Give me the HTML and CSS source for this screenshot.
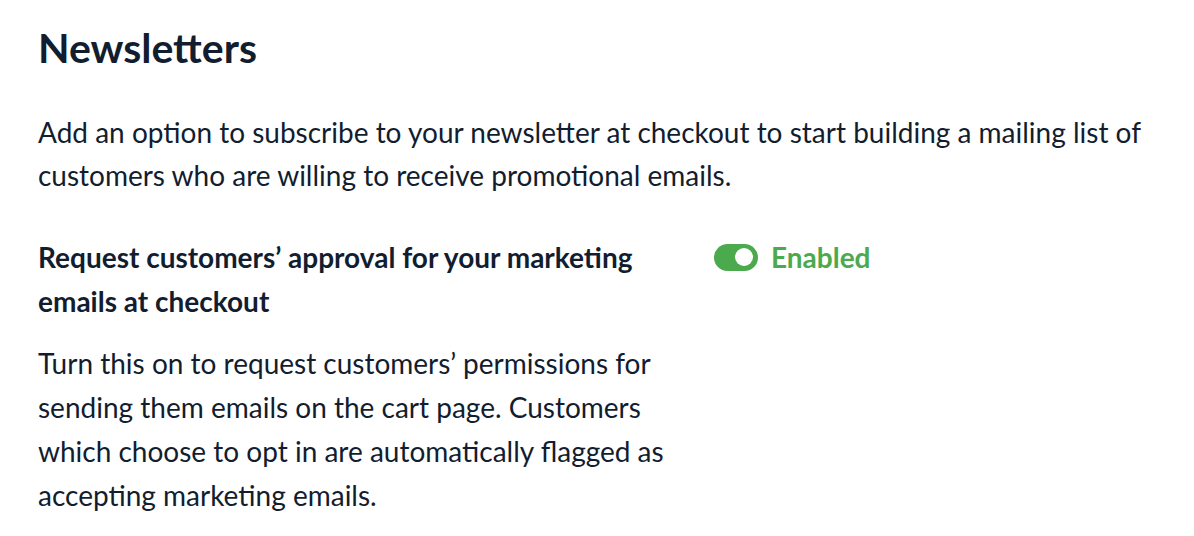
FILE: index.html
```html
<!DOCTYPE html>
<html lang="en">
<head>
    <meta charset="UTF-8">
    <meta name="viewport" content="width=device-width, initial-scale=1.0">
    <title>Newsletters</title>
    <link rel="stylesheet" href="styles.css">
</head>
<body>

    <section class="settings">
        <h1 class="title">Newsletters</h1>

        <p class="intro">Add an option to subscribe to your newsletter at checkout to start building a mailing list of customers who are willing to receive promotional emails.</p>

        <div class="setting-row">
            <div class="setting-text">
                <h2 class="setting-label">Request customers’ approval for your marketing emails at checkout</h2>
                <p class="setting-help">Turn this on to request customers’ permissions for sending them emails on the cart page. Customers which choose to opt in are automatically flagged as accepting marketing emails.</p>
            </div>
            <label class="toggle-wrap">
                <span class="toggle on"><span class="knob"></span></span>
                <span class="toggle-label">Enabled</span>
            </label>
        </div>
    </section>

</body>
</html>
```

FILE: styles.css
```css
body {
    font-family: Lato, "Open Sans", sans-serif;
    margin: 0;
    background-color: #fff;
    color: #121d2f;
}
.settings {
    padding: 22px 38px 0;
}
.title {
    font-size: 41px;
    font-weight: 700;
    line-height: 52px;
    margin: 0 0 37px;
}
.intro {
    font-size: 28px;
    line-height: 43px;
    margin: 0 0 38px;
}
.setting-row {
    display: flex;
    align-items: flex-start;
    gap: 36px;
}
.setting-text {
    width: 640px;
}
.setting-label {
    font-size: 28px;
    font-weight: 700;
    line-height: 44px;
    margin: 0 0 18px;
}
.setting-help {
    font-size: 28px;
    line-height: 44px;
    margin: 0;
}
.toggle-wrap {
    display: flex;
    align-items: center;
    gap: 13px;
    cursor: pointer;
}
.toggle {
    display: flex;
    align-items: center;
    justify-content: flex-end;
    width: 44px;
    height: 27px;
    padding: 0 5px;
    box-sizing: border-box;
    border-radius: 14px;
    background-color: #4caa4e;
}
.knob {
    width: 18px;
    height: 18px;
    border-radius: 50%;
    background-color: #fff;
}
.toggle-label {
    font-size: 28px;
    font-weight: 700;
    line-height: 44px;
    color: #4caa4e;
}
```
